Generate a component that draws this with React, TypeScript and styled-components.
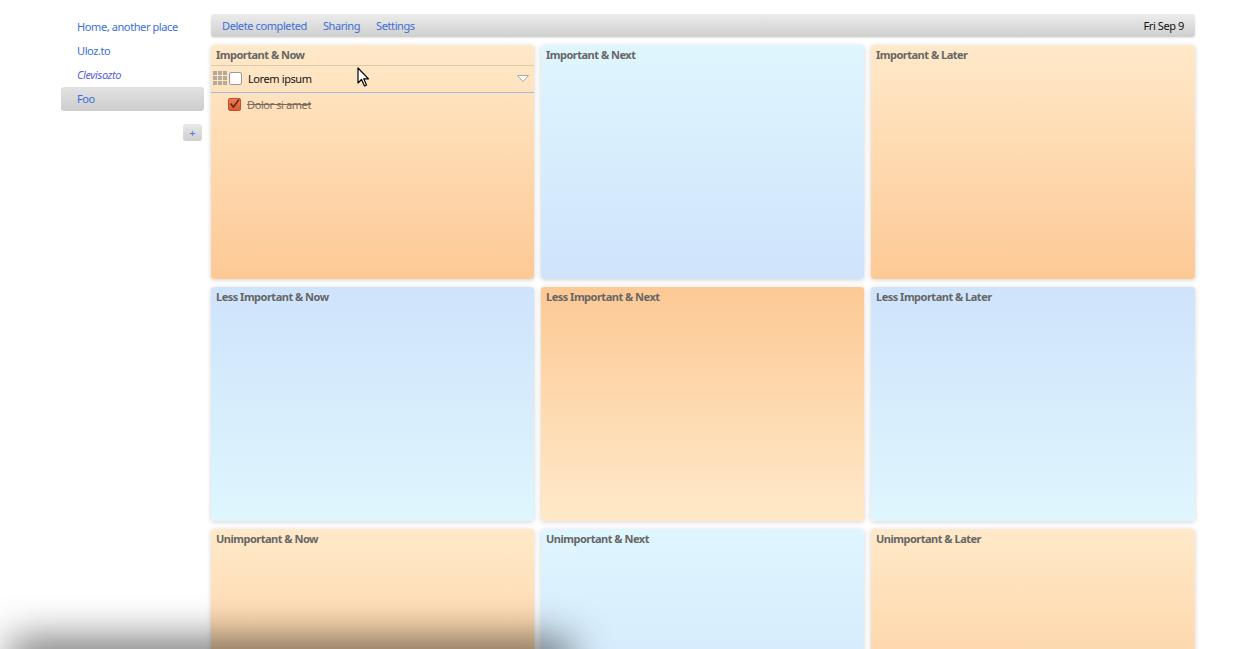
import React from 'react';
import styled, { createGlobalStyle, css } from 'styled-components';

const GlobalStyle = createGlobalStyle`
    html, body {
        margin: 0;
        padding: 0;
        background: #fff;
        overflow: hidden;
    }

    body {
        font-family: "Noto Sans", "Open Sans", sans-serif;
        font-size: 11px;
        letter-spacing: -0.4px;
    }
`;

type Tone = 'orange' | 'blue';

const gradients = {
    orange: ['#ffe9c9', '#fdc995'],
    blue: ['#dff6fe', '#cfe3fb'],
};

const Page = styled.div`
    display: flex;
    align-items: flex-start;
    gap: 7px;
    padding: 14px 0 0 61px;
    height: 649px;
    box-sizing: border-box;
    overflow: hidden;
`;

const Sidebar = styled.nav`
    width: 143px;
    flex: 0 0 143px;
    padding-top: 1px;
    display: flex;
    flex-direction: column;
`;

const NavItem = styled.a<{ $active?: boolean; $italic?: boolean }>`
    display: block;
    height: 24px;
    line-height: 24px;
    padding: 0 16px;
    border-radius: 3px;
    color: ${p => (p.$italic ? '#5b5fd6' : '#3b6fd6')};
    font-style: ${p => (p.$italic ? 'italic' : 'normal')};
    text-decoration: none;
    cursor: pointer;

    ${p => p.$active && css`
        background: linear-gradient(#e2e2e2, #cdcdcd);
    `}
`;

const AddButton = styled.button`
    align-self: flex-end;
    margin: 13px 2px 0 0;
    width: 19px;
    height: 17px;
    padding: 0;
    border: none;
    border-radius: 3px;
    background: linear-gradient(#e8e8e8, #cfcfcf);
    color: #4a78d8;
    font-size: 11px;
    line-height: 17px;
    font-family: inherit;
`;

const Main = styled.main`
    width: 984px;
    display: flex;
    flex-direction: column;
    gap: 8px;
`;

const Toolbar = styled.div`
    height: 23px;
    display: flex;
    align-items: center;
    gap: 16px;
    padding: 0 11px;
    border-radius: 3px;
    background: linear-gradient(#ececec, #cfcfcf);
    box-shadow: 0 1px 2px rgba(0, 0, 0, 0.12);
`;

const ToolLink = styled.a`
    color: #3b6fd6;
    text-decoration: none;
    cursor: pointer;
`;

const DateLabel = styled.span`
    margin-left: auto;
    color: #111;
`;

const Grid = styled.div`
    display: grid;
    grid-template-columns: 323px 323px 324px;
    grid-auto-rows: 234px;
    column-gap: 7px;
    row-gap: 8px;
`;

const Card = styled.section<{ $tone: Tone; $flip?: boolean }>`
    border-radius: 3px;
    box-shadow: 0 1px 5px rgba(0, 0, 0, 0.18);
    background: linear-gradient(
        ${p => (p.$flip ? gradients[p.$tone][1] : gradients[p.$tone][0])},
        ${p => (p.$flip ? gradients[p.$tone][0] : gradients[p.$tone][1])}
    );
    display: flex;
    flex-direction: column;
`;

const CardTitle = styled.h3<{ $ruled?: boolean }>`
    margin: 0;
    height: 20px;
    line-height: 20px;
    padding: 0 5px;
    font-size: 11px;
    font-weight: bold;
    letter-spacing: -0.5px;
    color: #666;
    border-bottom: 1px solid ${p => (p.$ruled ? '#ddc9ac' : 'transparent')};
`;

const TaskRow = styled.div<{ $editing?: boolean }>`
    position: relative;
    display: flex;
    align-items: center;
    box-sizing: border-box;
    height: ${p => (p.$editing ? 27 : 22)}px;
    padding: 0 0 ${p => (p.$editing ? 2 : 0)}px ${p => (p.$editing ? 2 : 17)}px;
    border-bottom: ${p => (p.$editing ? '1px solid #a3b9de' : 'none')};
    color: ${p => (p.$editing ? '#111' : '#7a6a5a')};
`;

const Handle = styled.span`
    display: grid;
    grid-template-columns: repeat(3, 4px);
    grid-auto-rows: 4px;
    gap: 1px;
    margin-right: 2px;

    i {
        display: block;
        background: #b5aa9c;
    }
`;

const Check = styled.span<{ $done?: boolean }>`
    width: 11px;
    height: 11px;
    border-radius: 2px;
    display: flex;
    align-items: center;
    justify-content: center;
    margin-right: 6px;
    ${p => p.$done ? css`
        border: 1px solid #c4502e;
        background: linear-gradient(#f07a50, #dd5a32);
    ` : css`
        border: 1px solid #9a9a9a;
        background: #fff;
    `}
`;

const TaskText = styled.span<{ $done?: boolean }>`
    text-decoration: ${p => (p.$done ? 'line-through' : 'none')};
`;

const Expand = styled.svg`
    position: absolute;
    right: 5px;
    top: 9px;
`;

const Pointer = styled.svg`
    position: fixed;
    left: 357px;
    top: 67px;
    pointer-events: none;
`;

const WindowShade = styled.div`
    position: fixed;
    left: 10px;
    bottom: -34px;
    width: 560px;
    height: 44px;
    background: rgba(0, 0, 0, 0.55);
    filter: blur(20px);
    pointer-events: none;
`;

const quadrants: { title: string; tone: Tone; flip?: boolean }[] = [
    { title: 'Important & Now', tone: 'orange' },
    { title: 'Important & Next', tone: 'blue' },
    { title: 'Important & Later', tone: 'orange' },
    { title: 'Less Important & Now', tone: 'blue', flip: true },
    { title: 'Less Important & Next', tone: 'orange', flip: true },
    { title: 'Less Important & Later', tone: 'blue', flip: true },
    { title: 'Unimportant & Now', tone: 'orange' },
    { title: 'Unimportant & Next', tone: 'blue' },
    { title: 'Unimportant & Later', tone: 'orange' },
];

const places = [
    { name: 'Home, another place' },
    { name: 'Uloz.to' },
    { name: 'Clevisozto', italic: true },
    { name: 'Foo', active: true },
];

const FirstTasks: React.FC = () => (
    <>
        <TaskRow $editing>
            <Handle>
                {Array.from({ length: 9 }).map((_, i) => <i key={i} />)}
            </Handle>
            <Check />
            <TaskText>Lorem ipsum</TaskText>
            <Expand width="12" height="7" viewBox="0 0 12 7">
                <path d="M0.5 0.5 H11.5 L6 6.5 Z" fill="#fff" stroke="#a9a9a9" />
            </Expand>
        </TaskRow>
        <TaskRow>
            <Check $done>
                <svg width="11" height="10" viewBox="0 0 11 10">
                    <path d="M1.5 4.5 L4.5 8 L10 0.5" fill="none" stroke="#5a2a1a" strokeWidth="1.6" />
                </svg>
            </Check>
            <TaskText $done>Dolor si amet</TaskText>
        </TaskRow>
    </>
);

const App: React.FC = () => (
    <>
        <GlobalStyle />
        <Page>
            <Sidebar>
                {places.map(p => (
                    <NavItem key={p.name} $active={p.active} $italic={p.italic}>{p.name}</NavItem>
                ))}
                <AddButton>+</AddButton>
            </Sidebar>
            <Main>
                <Toolbar>
                    <ToolLink>Delete completed</ToolLink>
                    <ToolLink>Sharing</ToolLink>
                    <ToolLink>Settings</ToolLink>
                    <DateLabel>Fri Sep 9</DateLabel>
                </Toolbar>
                <Grid>
                    {quadrants.map((q, i) => (
                        <Card key={q.title} $tone={q.tone} $flip={q.flip}>
                            <CardTitle $ruled={i === 0}>{q.title}</CardTitle>
                            {i === 0 && <FirstTasks />}
                        </Card>
                    ))}
                </Grid>
            </Main>
        </Page>
        <Pointer width="13" height="20" viewBox="0 0 13 20">
            <path d="M1 1 V16 L4.5 12.5 L7.5 19 L9.5 18 L6.7 11.8 L11.5 11.8 Z" fill="#fff" stroke="#000" strokeWidth="1.2" strokeLinejoin="round" />
        </Pointer>
        <WindowShade />
    </>
);

export default App;
